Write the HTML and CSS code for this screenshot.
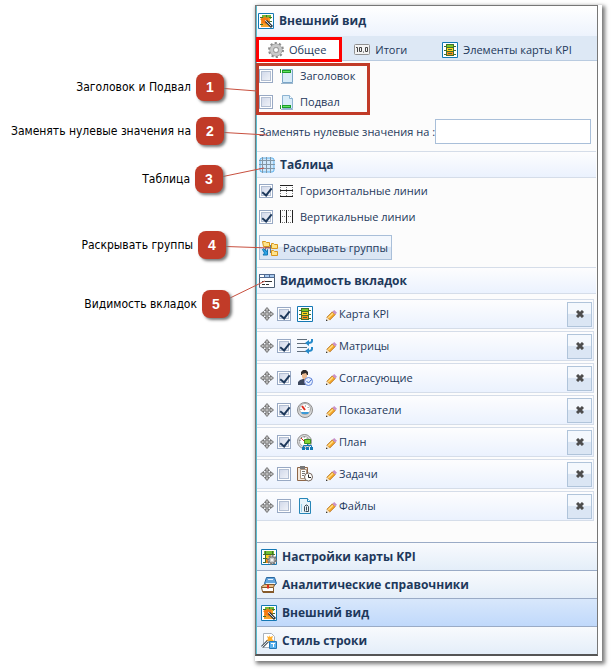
FILE: index.html
```html
<!DOCTYPE html>
<html lang="ru">
  <head>
    <meta charset="UTF-8" />
    <meta name="viewport" content="width=device-width, initial-scale=1.0" />
    <title>Внешний вид</title>
    <link rel="stylesheet" href="styles.css">
  </head>
  <body>
    <!-- icon set -->
    <svg class="sprite" aria-hidden="true">
      <symbol id="kpi" viewBox="0 0 16 16">
        <path fill="#fff" stroke="#1478b4" d="M.5.5h15v15H.5z"/>
        <path fill="#7ac829" d="M4 2h8v4H4z"/>
        <path fill="#ffd21c" d="M4 6h8v4H4z"/>
        <path fill="#f88b1c" d="M4 10h8v4H4z"/>
        <path fill="none" stroke="#43702b" d="M4.500 2v12M11.500 2v12M2 4.500h3M11 4.500h3M2 8.500h3M11 8.500h3M2 12.500h3M11 12.500h3M4 2.500h8M4 5.500h8M4 9.500h8M4 13.500h8M6 7.500h4M6 11.500h4"/>
      </symbol>
      <symbol id="look" viewBox="0 0 16 16">
        <path fill="#fff" stroke="#1478b4" d="M.5.5h15v15H.5z"/>
        <path fill="#6dbb35" d="M4 2h9v4H4z"/>
        <path fill="#f7a52c" d="M3 5h9v9H3z"/>
        <path fill="none" stroke="#43702b" d="M2 4.500h3M11 4.500h3M2 11.500h3M11 8.500h3M8.500 2v2"/>
        <path fill="#f47a13" d="M7 3l1 2 3-1-1 3 2 2-3 0-1 3-2-2-3 1 1-3-2-2 3-1z"/>
        <path fill="none" stroke="#303b43" stroke-width="3" d="M8 8l6 6"/>
        <path fill="none" stroke="#cbd3d9" d="M7 7l6 6"/>
      </symbol>
      <symbol id="gear" viewBox="0 0 16 16">
        <circle cx="8" cy="8" r="6.500" fill="none" stroke="#8d8d8d" stroke-width="3" stroke-dasharray="2 2.080"/>
        <circle cx="8" cy="8" r="4.500" fill="none" stroke="#8e8e8e" stroke-width="4"/>
        <circle cx="8" cy="8" r="4.500" fill="none" stroke="#c9c9c9" stroke-width="3"/>
        <circle cx="8" cy="8" r="2.500" fill="#fff" stroke="#999"/>
      </symbol>
      <symbol id="totals" viewBox="0 0 16 16">
        <rect x=".5" y="2.500" width="15" height="10" rx="1" fill="#f3f3f3" stroke="#919191"/>
        <path fill="none" stroke="#444" d="M2 5.500h1.500V10M5.500 5.500h2v4h-2zM9 10h1M11.500 5.500h2v4h-2z"/>
      </symbol>
      <symbol id="page-top" viewBox="0 0 16 16">
        <path fill="#d9ecf8" stroke="#7ba5c8" d="M3.500 1.500h10v13h-10z"/>
        <path fill="#1c9b2c" d="M1 1h1v4H1zM3 2h9v3H3z"/>
        <path fill="#5ce65d" d="M4 3h7v1H4z"/>
        <path fill="#9db7cc" d="M2 15h12v1H2z"/>
      </symbol>
      <symbol id="page-bottom" viewBox="0 0 16 16">
        <path fill="#d9ecf8" stroke="#8db3d2" d="M3.500 1.500h7l3 3v10h-10z"/>
        <path fill="#fff" stroke="#8db3d2" d="M10.500 1.500v3h3"/>
        <path fill="#1c9b2c" d="M1 11h1v4H1zM3 11h9v3H3z"/>
        <path fill="#5ce65d" d="M4 12h7v1H4z"/>
        <path fill="#9db7cc" d="M2 15h12v1H2z"/>
      </symbol>
      <symbol id="grid" viewBox="0 0 16 16">
        <rect x="1" y="1" width="14" height="14" rx="2" fill="#cfe8fc" stroke="#58b0ee"/>
        <path fill="none" stroke="#8296a5" d="M0 3.500h16M0 7.500h16M0 11.500h16M3.500 0v16M7.500 0v16M11.500 0v16"/>
      </symbol>
      <symbol id="rows" viewBox="0 0 16 16">
        <path fill="none" stroke="#777" stroke-dasharray="1 1" d="M1.500 2v12M7.500 2v12M13.500 2v12"/>
        <path fill="none" stroke="#222" d="M1 2.500h13M1 7.500h13"/>
        <path fill="#222" d="M1 13h13v1H1z"/>
      </symbol>
      <symbol id="cols" viewBox="0 0 16 16">
        <path fill="none" stroke="#777" stroke-dasharray="1 1" d="M1 1.500h13M1 7.500h13M1 13.500h13"/>
        <path fill="none" stroke="#222" d="M1.500 1v13M7.500 1v13M13.500 1v13"/>
      </symbol>
      <symbol id="groups" viewBox="0 0 16 16">
        <path fill="none" stroke="#66788a" d="M3.500 5v5M4 7.500h6M8.500 5v8M8 12.500h3"/>
        <path fill="#ffe48a" stroke="#d9961c" d="M.5 1.500h3l1 1h3v4h-6zM9.500 3.500h2l1 1h3v4h-6zM9.500 10.500h2l1 1h3v4h-6z"/>
        <path fill="#2ca3e6" stroke="#1478b4" d="M.5 9.500l1-1 3 3 1-2v5.500H1l1.500-2z"/>
      </symbol>
      <symbol id="tabs" viewBox="0 0 16 16">
        <path fill="#fff" stroke="#4e5f74" d="M.5 1.500h15v13H.5z"/>
        <path fill="#526b91" d="M0 1h16v1H0zM0 4h6v1H0zM5 1h1v4H5zM10 1h1v4h-1zM6 4h10v1H6z"/>
        <path fill="#a6c8ef" d="M6 2h4v2H6zM11 2h4v2h-4z"/>
        <path fill="none" stroke="#333" d="M3 8.500h2M6 8.500h7M3 11.500h3M7 11.500h3"/>
      </symbol>
      <symbol id="move" viewBox="0 0 14 14">
        <path fill="#b8b8b8" stroke="#747474" d="M7 .5L9.500 3.500H8V6h2.500V4.500L13.500 7l-3 2.500V8H8v2.500h1.500L7 13.500l-2.500-3H6V8H3.500v1.500L.5 7l3-2.500V6H6V3.500H4.500z"/>
      </symbol>
      <symbol id="pencil" viewBox="0 0 12 12">
        <path fill="#f7a928" stroke="#b8701b" d="M1 8l6-6 3 3-6 6z"/>
        <path fill="#ffe088" d="M2 8l5-5 1 1-5 5z"/>
        <path fill="#c991c9" d="M7 2l2-2 3 3-2 2z"/>
        <path fill="#f6dfb8" d="M1 8l3 3-4 1z"/>
        <path fill="#333" d="M0 10l2 2H0z"/>
      </symbol>
      <symbol id="matrix" viewBox="0 0 16 16">
        <path fill="none" stroke="#5f6d7b" d="M0 1.500h10M0 5.500h9M0 9.500h10M0 13.500h9"/>
        <path fill="none" stroke="#2589c9" stroke-width="2" d="M15 1v2q0 2-4 2M15 9v2q0 2-4 2"/>
        <path fill="#2589c9" d="M8 5l4-3v6zM8 13l4-3v6z"/>
      </symbol>
      <symbol id="person" viewBox="0 0 16 16">
        <path fill="#3b465c" d="M1 15v-3l2-2 3-1h3l4 2v4z"/>
        <path fill="#e9b98f" d="M5 3h5v4L9 9H6L5 7z"/>
        <path fill="#2d2a2a" d="M4 5V2l2-2h3l2 2v3h-1L9 3 5 4v1z"/>
        <path fill="#d96a2b" d="M7 9h1v4H7z"/>
        <circle cx="11.500" cy="11.500" r="4" fill="#e6f0ff" stroke="#6687d8"/>
        <path fill="none" stroke="#3f67cb" d="M9.500 11l2 2 3-3.500"/>
      </symbol>
      <symbol id="gauge" viewBox="0 0 16 16">
        <circle cx="8" cy="8" r="7.500" fill="#d7d7d7" stroke="#8d8d8d"/>
        <circle cx="8" cy="7" r="5.500" fill="#fff" stroke="#a8a8a8"/>
        <path fill="none" stroke="#444" stroke-dasharray="1 2" d="M4 8a4 4 0 0 1 8 0"/>
        <path fill="none" stroke="#e02c1c" stroke-width="2" d="M5 4l3 4"/>
        <path fill="#3a9ad8" d="M4 10h8l-1 2H5z"/>
      </symbol>
      <symbol id="plan" viewBox="0 0 16 16">
        <circle cx="7.500" cy="7.500" r="7" fill="#ddd" stroke="#8d8d8d"/>
        <circle cx="7.500" cy="7.500" r="5" fill="#fff" stroke="#aaa"/>
        <path fill="none" stroke="#555" stroke-dasharray="1 2" d="M3 7a4 4 0 0 1 8 0"/>
        <path fill="none" stroke="#e02c1c" d="M4 4l4 4"/>
        <path fill="#86d433" stroke="#3c8d1f" d="M7.500 5.500h6v4h-6z"/>
        <path fill="none" stroke="#1478b4" d="M10.500 10v2M6.500 14v-2.500h8V14"/>
        <path fill="#1478b4" d="M5 13h3v3H5zM9 13h3v3H9zM13 13h3v3h-3z"/>
      </symbol>
      <symbol id="tasks" viewBox="0 0 16 16">
        <path fill="#f3e8dc" stroke="#8e6648" d="M.5 1.500h10v13H.5z"/>
        <path fill="#fff" stroke="#ad9580" d="M3.500 3.500h6v9h-6z"/>
        <path fill="#777" d="M3 0h5v3H3zM5 5h3v1H5zM5 7h3v1H5zM5 9h2v1H5z"/>
        <circle cx="11.500" cy="11" r="4" fill="#fff" stroke="#75665e"/>
        <path fill="none" stroke="#222" d="M11.500 8.500v3H14"/>
      </symbol>
      <symbol id="files" viewBox="0 0 16 16">
        <path fill="#e7f4fb" stroke="#2786b8" d="M2.500.5h8l3 3v12h-11z"/>
        <path fill="#fff" stroke="#2786b8" d="M10.500.5v3h3"/>
        <path fill="#9bd0ea" d="M4 6h1v8H4z"/>
        <path fill="none" stroke="#3f4d57" d="M7.500 13.500v-5l1.500-1.500h1l1.500 1.500v5H8.500M9.500 8.500v4"/>
      </symbol>
      <symbol id="settings" viewBox="0 0 16 16">
        <path fill="#fff" stroke="#1478b4" d="M.5.5h15v15H.5z"/>
        <path fill="#70be35" d="M3 2h10v4H3z"/>
        <path fill="#ffd21c" d="M4 6h6v4H4z"/>
        <path fill="#f88b1c" d="M4 10h3v4H4z"/>
        <path fill="none" stroke="#43702b" d="M4.500 2v12M2 5.500h12M2 9.500h4M2 13.500h3M11.500 2v3"/>
        <circle cx="11" cy="11" r="4" fill="#ccc" stroke="#777" stroke-width="2" stroke-dasharray="2 1"/>
        <circle cx="11" cy="11" r="3" fill="#ccc" stroke="#888"/>
        <circle cx="11" cy="11" r="1" fill="#fff"/>
      </symbol>
      <symbol id="books" viewBox="0 0 16 16">
        <path fill="#64a6df" stroke="#2b679d" d="M3.500 6.500l2-6h8l2 6-2 2h-9z"/>
        <path fill="#e7f3fc" d="M7 2h5v1H7zM5 6h9v1H5z"/>
        <path fill="#e9bd85" stroke="#855a2b" d="M.5 9.500l3-2h10l-1 3H.5z"/>
        <path fill="#fff" stroke="#855a2b" d="M.5 10.500h12v4H1.500z"/>
        <path fill="#855a2b" d="M1 14h12v2H2z"/>
        <path fill="#e32b1c" d="M6 8h2v4l-1-1-1 1z"/>
      </symbol>
      <symbol id="style" viewBox="0 0 16 16">
        <path fill="#fff" stroke="#abb3bb" d="M2.500.5h8l3 3v11h-11z"/>
        <path fill="#ffae2b" d="M8 2l1 2 3-1-1 3 2 2-3 0-1 3-1-3-3 0 2-2-1-3 2 1z"/>
        <path fill="none" stroke="#59636b" stroke-width="3" d="M1 14l6-6"/>
        <path fill="none" stroke="#dde2e6" d="M1 14l6-6"/>
        <path fill="#5cb3ed" stroke="#2378b8" d="M8.500 8.500h7v7h-7z"/>
        <path fill="none" stroke="#fff" d="M10 10.500h4M12.500 10v4"/>
      </symbol>
      <symbol id="close" viewBox="0 0 8 8">
        <path fill="none" stroke="#4d4d4d" stroke-width="3" d="M1 1l6 6M7 1L1 7"/>
      </symbol>
    </svg>

    <main class="page">
      <section class="shot">
        <div class="panel">
          <h1 class="panel-title"><svg class="icon"><use href="#look"/></svg>Внешний вид</h1>
          <nav class="tabs">
            <button class="tab active"><svg class="icon"><use href="#gear"/></svg>Общее</button>
            <button class="tab"><svg class="icon"><use href="#totals"/></svg>Итоги</button>
            <button class="tab wide"><svg class="icon"><use href="#kpi"/></svg>Элементы карты KPI</button>
          </nav>

          <div class="marked">
            <label class="check-row"><input type="checkbox"><svg class="icon"><use href="#page-top"/></svg>Заголовок</label>
            <label class="check-row"><input type="checkbox"><svg class="icon"><use href="#page-bottom"/></svg>Подвал</label>
          </div>
          <div class="field">
            <label for="zero">Заменять нулевые значения на :</label>
            <input id="zero" class="text" type="text">
          </div>

          <h2 class="section-title"><svg class="icon"><use href="#grid"/></svg>Таблица</h2>
          <div class="section-body">
            <label class="check-row"><input type="checkbox" checked><svg class="icon"><use href="#rows"/></svg>Горизонтальные линии</label>
            <label class="check-row"><input type="checkbox" checked><svg class="icon"><use href="#cols"/></svg>Вертикальные линии</label>
            <button class="expand"><svg class="icon"><use href="#groups"/></svg>Раскрывать группы</button>
          </div>

          <h2 class="section-title"><svg class="icon"><use href="#tabs"/></svg>Видимость вкладок</h2>
          <ul class="list">
            <li class="item">
              <svg class="move"><use href="#move"/></svg>
              <input type="checkbox" id="t1" checked>
              <svg class="icon"><use href="#kpi"/></svg>
              <label for="t1"><svg class="pencil"><use href="#pencil"/></svg>Карта KPI</label>
              <button class="remove" aria-label="Удалить"><svg><use href="#close"/></svg></button>
            </li>
            <li class="item">
              <svg class="move"><use href="#move"/></svg>
              <input type="checkbox" id="t2" checked>
              <svg class="icon"><use href="#matrix"/></svg>
              <label for="t2"><svg class="pencil"><use href="#pencil"/></svg>Матрицы</label>
              <button class="remove" aria-label="Удалить"><svg><use href="#close"/></svg></button>
            </li>
            <li class="item">
              <svg class="move"><use href="#move"/></svg>
              <input type="checkbox" id="t3" checked>
              <svg class="icon"><use href="#person"/></svg>
              <label for="t3"><svg class="pencil"><use href="#pencil"/></svg>Согласующие</label>
              <button class="remove" aria-label="Удалить"><svg><use href="#close"/></svg></button>
            </li>
            <li class="item">
              <svg class="move"><use href="#move"/></svg>
              <input type="checkbox" id="t4" checked>
              <svg class="icon"><use href="#gauge"/></svg>
              <label for="t4"><svg class="pencil"><use href="#pencil"/></svg>Показатели</label>
              <button class="remove" aria-label="Удалить"><svg><use href="#close"/></svg></button>
            </li>
            <li class="item">
              <svg class="move"><use href="#move"/></svg>
              <input type="checkbox" id="t5" checked>
              <svg class="icon"><use href="#plan"/></svg>
              <label for="t5"><svg class="pencil"><use href="#pencil"/></svg>План</label>
              <button class="remove" aria-label="Удалить"><svg><use href="#close"/></svg></button>
            </li>
            <li class="item">
              <svg class="move"><use href="#move"/></svg>
              <input type="checkbox" id="t6">
              <svg class="icon"><use href="#tasks"/></svg>
              <label for="t6"><svg class="pencil"><use href="#pencil"/></svg>Задачи</label>
              <button class="remove" aria-label="Удалить"><svg><use href="#close"/></svg></button>
            </li>
            <li class="item">
              <svg class="move"><use href="#move"/></svg>
              <input type="checkbox" id="t7">
              <svg class="icon"><use href="#files"/></svg>
              <label for="t7"><svg class="pencil"><use href="#pencil"/></svg>Файлы</label>
              <button class="remove" aria-label="Удалить"><svg><use href="#close"/></svg></button>
            </li>
          </ul>

          <div class="accordion">
            <button class="acc"><svg class="icon"><use href="#settings"/></svg>Настройки карты KPI</button>
            <button class="acc"><svg class="icon"><use href="#books"/></svg>Аналитические справочники</button>
            <button class="acc current"><svg class="icon"><use href="#look"/></svg>Внешний вид</button>
            <button class="acc"><svg class="icon"><use href="#style"/></svg>Стиль строки</button>
          </div>
        </div>
      </section>

      <!-- callouts over the panel -->
      <svg class="leaders" aria-hidden="true">
        <path d="M224 88.500L257 91M224 132.500L267 135M223 176.500L264 168M226 246.500L270 248M230 298L265 281"/>
      </svg>
      <div class="callout c1">Заголовок и Подвал<b>1</b></div>
      <div class="callout c2">Заменять нулевые значения на<b>2</b></div>
      <div class="callout c3">Таблица<b>3</b></div>
      <div class="callout c4">Раскрывать группы<b>4</b></div>
      <div class="callout c5">Видимость вкладок<b>5</b></div>
    </main>
  </body>
</html>
```

FILE: styles.css
```css
* {
  box-sizing: border-box;
}
body {
  margin: 0;
  background: #fff;
  color: #1e395b;
  font-family: "Open Sans", "Noto Sans", sans-serif;
  font-size: 11px;
  line-height: 16px;
}
button {
  margin: 0;
  padding: 0;
  border: 0;
  background: none;
  color: inherit;
  font: inherit;
  text-align: left;
  white-space: nowrap;
}
svg {
  display: block;
  flex: none;
}
.sprite {
  position: absolute;
  width: 0;
  height: 0;
}
.icon {
  width: 16px;
  height: 16px;
}
.page {
  position: relative;
  padding: 5px 9px 9px 255px;
}
.shot {
  padding: 0 4px 5px 0;
  background: #fff;
  box-shadow: 2px 2px 4px 1px #777;
}
.panel {
  border: 1px solid #777;
  border-bottom: 2px solid #555;
  background: #fcfcfc;
  box-shadow: inset 1px 0 #5bbcd0;
  padding-left: 1px;
}

/* header and tabs */
.panel-title {
  display: flex;
  align-items: center;
  gap: 5px;
  height: 30px;
  margin: 0;
  padding-left: 1px;
  background: linear-gradient(#fff, #edf3fd);
  font-size: 12px;
}
.tabs {
  display: flex;
  height: 25px;
  padding-top: 1px;
  background: #dde8f5;
  border-bottom: 1px solid #b9cbe0;
}
.tab {
  display: flex;
  align-items: center;
  gap: 5px;
  height: 25px;
  padding: 0 12px;
}
.tab.active {
  margin-left: -1px;
  padding: 0 13px 0 9px;
  border: 3px solid #f00;
  background: #fff;
}
.tab.wide {
  margin-left: 11px;
}

/* checkboxes */
input[type="checkbox"] {
  appearance: none;
  position: relative;
  flex: none;
  width: 14px;
  height: 14px;
  margin: 0;
  border: 1px solid #98a9c4;
  background: linear-gradient(135deg, #cbd3e6, #f7f8fc);
  box-shadow: inset 0 0 0 1px #fff, inset 0 0 0 2px #b3bfd3;
}
input[type="checkbox"]:checked::after {
  content: "";
  position: absolute;
  left: 4px;
  top: 1px;
  width: 4px;
  height: 8px;
  border: solid #1e395b;
  border-width: 0 2px 2px 0;
  transform: rotate(38deg);
}
.check-row {
  display: flex;
  align-items: center;
  height: 26px;
  padding-left: 2px;
}
.check-row .icon {
  margin: 0 5px 0 6px;
}
.marked {
  display: flex;
  flex-direction: column;
  gap: 6px;
  width: 114px;
  margin-top: 2px;
  margin-left: -1px;
  border: 3px solid #c13b28;
}
.marked .check-row {
  height: 20px;
  padding-left: 0;
}
.field {
  display: flex;
  align-items: center;
  padding: 4px 6px 7px 2px;
  white-space: nowrap;
}
.text {
  flex: 1;
  min-width: 0;
  height: 25px;
  padding: 0 4px;
  border: 1px solid #a9bfd9;
  background: #fff;
  font: inherit;
}

/* sections */
.section-title {
  display: flex;
  align-items: center;
  gap: 5px;
  height: 27px;
  margin: 0 1px 0 0;
  padding-left: 2px;
  border: solid #d5dde9;
  border-width: 1px 0;
  background: linear-gradient(#fdfdfe, #ebf2fe);
  font-size: 12px;
}
.section-body {
  padding-bottom: 7px;
}
.expand {
  display: flex;
  align-items: center;
  gap: 5px;
  height: 25px;
  margin: 5px 0 0 2px;
  padding: 0 3px 0 2px;
  border: 1px solid #a9bfd9;
  background: linear-gradient(#f4f8fd 0 45%, #dbe6f4 50% 100%);
}
.list {
  display: flex;
  flex-direction: column;
  gap: 2px;
  margin: 0;
  padding: 5px 3px 21px 0;
  list-style: none;
}
.item {
  display: flex;
  align-items: center;
  height: 30px;
  padding: 0 1px 0 3px;
  border: solid #d5dde9;
  border-width: 1px 1px 1px 0;
  background: linear-gradient(#fdfdfe, #ebf2fe);
}
.move {
  width: 14px;
  height: 14px;
  margin-right: 3px;
}
.item .icon {
  margin: 0 13px 0 6px;
}
.item label {
  display: flex;
  align-items: center;
  gap: 2px;
  flex: 1;
}
.pencil {
  width: 11px;
  height: 11px;
  margin-top: 3px;
}
.remove {
  display: flex;
  align-items: center;
  justify-content: center;
  width: 25px;
  height: 25px;
  border: 1px solid #b0c4da;
  background: linear-gradient(#f4f8fd 0 45%, #dbe6f4 50% 100%);
}
.remove svg {
  width: 8px;
  height: 8px;
}

/* bottom accordion */
.acc {
  display: flex;
  align-items: center;
  gap: 5px;
  width: 100%;
  height: 28px;
  padding-left: 4px;
  border-top: 1px solid #9aabc6;
  background: linear-gradient(#f8fafd, #e4eef9);
  font-size: 12px;
  font-weight: bold;
}
.acc.current {
  background: linear-gradient(#d8e7fb, #c0d9fb);
}

/* callouts */
.leaders {
  position: absolute;
  left: 0;
  top: 0;
  width: 300px;
  height: 330px;
  fill: none;
  stroke: #c8503f;
  pointer-events: none;
}
.callout {
  position: absolute;
  left: 0;
  display: flex;
  align-items: center;
  justify-content: flex-end;
  gap: 5px;
  width: 224px;
  color: #000;
  font-family: "DejaVu Sans Condensed", "DejaVu Sans", sans-serif;
  font-size: 12px;
  white-space: nowrap;
}
.callout b {
  width: 28px;
  height: 28px;
  border-radius: 8px;
  background: #c13b28;
  box-shadow: 2px 2px 3px #777;
  color: #fff;
  font: bold 14px/28px "Liberation Sans", sans-serif;
  text-align: center;
}
.c1 { top: 73px; }
.c2 { top: 117px; }
.c3 { top: 165px; width: 223px; }
.c4 { top: 231px; width: 226px; }
.c5 { top: 290px; width: 230px; }
```
